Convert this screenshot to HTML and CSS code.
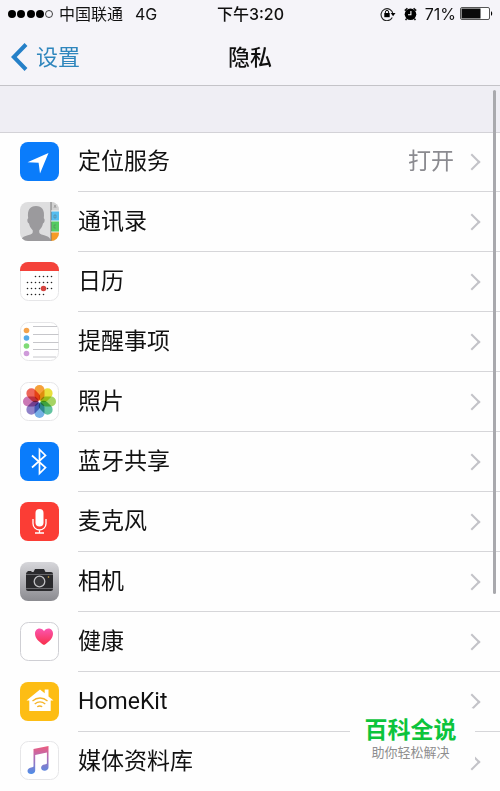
FILE: index.html
```
<!DOCTYPE html>
<html lang="zh-CN">
<head>
	<meta charset="utf-8">
	<meta name="viewport" content="width=device-width, initial-scale=1">
	<title>隐私</title>
	<link rel="stylesheet" href="styles.css">
</head>
<body>
	<header class="header">
		<div class="status">
			<div class="status-left">
				<svg class="signal" viewBox="0 0 46 10" width="46" height="10">
					<circle cx="4" cy="5" r="4"/>
					<circle cx="13" cy="5" r="4"/>
					<circle cx="23" cy="5" r="4"/>
					<circle cx="32" cy="5" r="4"/>
					<circle cx="41" cy="5" r="3.5" fill="none" stroke="#111" stroke-width="0.8"/>
				</svg>
				<span class="carrier">中国联通</span>
				<span>4G</span>
			</div>
			<div class="time">下午3:20</div>
			<div class="status-right">
				<svg class="lock" viewBox="0 0 16 14" width="16" height="14">
					<path d="M12.3 10.6A6 6 0 1 1 13 7" fill="none" stroke="#222" stroke-width="1.1"/>
					<path d="M10.7 6h4.8l-2.4 3.2z"/>
					<rect x="4.3" y="6" width="5.4" height="4.2"/>
					<path d="M5.4 6.2V5a1.6 1.6 0 0 1 3.2 0v1.2" fill="none" stroke="#111"/>
				</svg>
				<svg class="alarm" viewBox="0 0 13 14" width="13" height="14">
					<circle cx="6.500" cy="7.300" r="5.800"/>
					<path d="M.8 3.6 3.4 1.200M12.200 3.6 9.600 1.200M2.600 11.600 1.600 13.200M10.400 11.600l1 1.600" stroke="#111" stroke-width="1.500"/>
					<path d="M6.900 4v3.800H4" fill="none" stroke="#fff" stroke-width="1.100"/>
				</svg>
				<span class="percent">71%</span>
				<svg viewBox="0 0 33 14" width="33" height="14">
					<rect x=".5" y=".5" width="29" height="12" rx="1.5" fill="#fff" stroke="#555"/>
					<rect x="1.5" y="1.5" width="19" height="10" fill="#0a0a0a"/>
					<path d="M31 4.2c1.6.6 1.6 4 0 4.6z"/>
				</svg>
			</div>
		</div>
		<nav class="nav">
			<a class="back" href="#">
				<svg viewBox="0 0 17 28" width="17" height="28"><path d="M15 1.5 2.8 14 15 26.5" fill="none" stroke="#2580c8" stroke-width="4"/></svg>
				<span>设置</span>
			</a>
			<h1>隐私</h1>
		</nav>
	</header>

	<main>
		<ul class="list">
			<li><a class="row" href="#">
				<svg class="icon" viewBox="0 0 39 39">
					<rect width="39" height="39" rx="8" fill="#0a7cfb"/>
					<path d="M28.5 11 20 31.5 18.6 20.8 7.5 20.3z" fill="#fff"/>
				</svg>
				<span class="label"><span>定位服务</span><span class="value">打开</span><i class="chevron"></i></span>
			</a></li>
			<li><a class="row" href="#">
				<svg class="icon" viewBox="0 0 39 39">
					<clipPath id="tile"><rect width="39" height="39" rx="8"/></clipPath>
					<g clip-path="url(#tile)">
						<rect width="39" height="39" fill="#dededf"/>
						<path d="M1 39c.5-4 4-5 8.500-6.200 3-.8 3.500-1.800 3.200-4.500C10.500 26 9.500 24 9 21.500c-1.800-1-2.200-4.500-.8-5.300C7 8 10 4 16 4s9 4 7.800 12.200c1.400.8 1 4.300-.8 5.300-.5 2.500-1.500 4.500-3.700 6.800-.3 2.700.2 3.700 3.200 4.500C27 34 30 35 31 39z" fill="#9b9a9d"/>
						<path d="M31 0h8v9h-8z" fill="#d2d2d2"/>
						<path d="M31 9h8v10h-8z" fill="#55bdf0"/>
						<path d="M31 19h8v11h-8z" fill="#55cb62"/>
						<path d="M31 30h8v9h-8z" fill="#f69b26"/>
						<path d="M31 0v39" stroke="#777"/>
						<path d="M31 9h8M31 19h8M31 30h8" stroke="#eee"/>
						<path d="M34 6l1-3 1 3M34 13h2v3h-2zM36 23h-2v3h2" fill="none" stroke="#555" stroke-opacity=".5" stroke-width=".7"/>
					</g>
				</svg>
				<span class="label"><span>通讯录</span><i class="chevron"></i></span>
			</a></li>
			<li><a class="row" href="#">
				<svg class="icon" viewBox="0 0 39 39">
					<rect x=".5" y=".5" width="38" height="38" rx="8" fill="#fff" stroke="#e6e6e8"/>
					<path d="M0 9V8a8 8 0 0 1 8-8h23a8 8 0 0 1 8 8v1z" fill="#f4423a"/>
					<path d="M15.500 14.500H33M7.500 20.500H33M7.500 26.500H33M7.500 32.500H25" fill="none" stroke="#222" stroke-width="1.600" stroke-linecap="round" stroke-dasharray="0 4"/>
					<circle cx="23.500" cy="26.500" r="2.800" fill="#d5443f"/>
				</svg>
				<span class="label"><span>日历</span><i class="chevron"></i></span>
			</a></li>
			<li><a class="row" href="#">
				<svg class="icon" viewBox="0 0 39 39">
					<rect x=".5" y=".5" width="38" height="38" rx="8" fill="#fff" stroke="#e6e6e8"/>
					<path d="M13 4.500h24M13 12.500h25.500M13 20.500h25.500M13 27.500h25.500M13 35h23" stroke="#bfbfc4" stroke-width=".9"/>
					<circle cx="6.500" cy="8.500" r="2.800" fill="#f5a34b"/>
					<circle cx="6.500" cy="16" r="2.800" fill="#55aae8"/>
					<circle cx="6.500" cy="24" r="2.800" fill="#7fdb76"/>
					<circle cx="6.500" cy="31.500" r="2.800" fill="#cf9bda"/>
				</svg>
				<span class="label"><span>提醒事项</span><i class="chevron"></i></span>
			</a></li>
			<li><a class="row" href="#">
				<svg class="icon" viewBox="0 0 39 39">
					<rect x=".5" y=".5" width="38" height="38" rx="8" fill="#fff" stroke="#e6e6e8"/>
					<g class="petals">
						<rect x="14.500" y="3" width="10" height="15.500" rx="5" fill="#f6a13a"/>
						<rect x="14.500" y="3" width="10" height="15.500" rx="5" fill="#e9e03c" transform="rotate(45 19.500 19.500)"/>
						<rect x="14.500" y="3" width="10" height="15.500" rx="5" fill="#a6d464" transform="rotate(90 19.500 19.500)"/>
						<rect x="14.500" y="3" width="10" height="15.500" rx="5" fill="#62c3a0" transform="rotate(135 19.500 19.500)"/>
						<rect x="14.500" y="3" width="10" height="15.500" rx="5" fill="#76b0e6" transform="rotate(180 19.500 19.500)"/>
						<rect x="14.500" y="3" width="10" height="15.500" rx="5" fill="#8f82c8" transform="rotate(225 19.500 19.500)"/>
						<rect x="14.500" y="3" width="10" height="15.500" rx="5" fill="#cb79b5" transform="rotate(270 19.500 19.500)"/>
						<rect x="14.500" y="3" width="10" height="15.500" rx="5" fill="#ee6659" transform="rotate(315 19.500 19.500)"/>
					</g>
				</svg>
				<span class="label"><span>照片</span><i class="chevron"></i></span>
			</a></li>
			<li><a class="row" href="#">
				<svg class="icon" viewBox="0 0 39 39">
					<rect width="39" height="39" rx="8" fill="#0a7cfb"/>
					<path d="M12 13.500 25.500 25.500 19.500 31.500V7.500L25.500 13.500 12 25.500" fill="none" stroke="#fff" stroke-width="1.700"/>
				</svg>
				<span class="label"><span>蓝牙共享</span><i class="chevron"></i></span>
			</a></li>
			<li><a class="row" href="#">
				<svg class="icon" viewBox="0 0 39 39">
					<rect width="39" height="39" rx="8" fill="#fb3d35"/>
					<rect x="15.500" y="7" width="8" height="17.500" rx="4" fill="#fff"/>
					<path d="M13 17v4.500a6.500 6.500 0 0 0 13 0V17M19.500 28v3M15 31h9" fill="none" stroke="#fff" stroke-width="1.300"/>
				</svg>
				<span class="label"><span>麦克风</span><i class="chevron"></i></span>
			</a></li>
			<li><a class="row" href="#">
				<svg class="icon" viewBox="0 0 39 39">
					<linearGradient id="steel" x2="0" y2="1"><stop stop-color="#d6d6da"/><stop offset="1" stop-color="#8b8b90"/></linearGradient>
					<rect width="39" height="39" rx="8" fill="url(#steel)"/>
					<path d="M7.500 10V9h4v1h2l1.500-3h9l1.500 3H31a2 2 0 0 1 2 2v15a2 2 0 0 1-2 2H8a2 2 0 0 1-2-2V12q0-2 1.500-2z" fill="#29292c"/>
					<path d="M6 12.500h27M6 26.500h27" stroke="#77777b" stroke-width=".8"/>
					<circle cx="19.500" cy="19.500" r="6.800" fill="#29292c"/>
					<circle cx="19.500" cy="19.500" r="5.300" fill="#37373a" stroke="#c0c0c3" stroke-width="1.300"/>
					<circle cx="28.500" cy="15" r=".8" fill="#e0b54b"/>
				</svg>
				<span class="label"><span>相机</span><i class="chevron"></i></span>
			</a></li>
			<li><a class="row" href="#">
				<svg class="icon" viewBox="0 0 39 39">
					<linearGradient id="pink" x2="0" y2="1"><stop stop-color="#fb55b0"/><stop offset="1" stop-color="#f8304a"/></linearGradient>
					<rect x=".5" y=".5" width="38" height="38" rx="8" fill="#fff" stroke="#cfcfd4"/>
					<path d="M24 23c-5-3-9-7-9-11.300C15 8.600 17 6.500 19.500 6.500c2 0 3.500 1 4.500 2.700 1-1.700 2.500-2.700 4.500-2.700 2.500 0 4.500 2.100 4.500 5.200C33 16 29 20 24 23z" fill="url(#pink)"/>
				</svg>
				<span class="label"><span>健康</span><i class="chevron"></i></span>
			</a></li>
			<li><a class="row" href="#">
				<svg class="icon" viewBox="0 0 39 39">
					<rect width="39" height="39" rx="8" fill="#fdbd14"/>
					<path d="M20 7.500 6.500 18.500h2.800V29h21.400V18.500h2.800L28.500 14.400V7.500h-3.800v3.800z" fill="#fff"/>
					<path d="M12.500 19c4.500-4 10.500-4 15 0M14.700 22c3.200-2.600 7.400-2.600 10.600 0M17.200 24.800c1.800-1.200 3.200-1.200 5 0" fill="none" stroke="#f5b52a" stroke-width="1.300"/>
				</svg>
				<span class="label"><span>HomeKit</span><i class="chevron"></i></span>
			</a></li>
			<li><a class="row" href="#">
				<svg class="icon" viewBox="0 0 39 39">
					<linearGradient id="note" x1="0" y1="0" x2="0" y2="1"><stop stop-color="#ee5b7c"/><stop offset=".35" stop-color="#bb6bb0"/><stop offset="1" stop-color="#4d8ee8"/></linearGradient>
					<rect x=".5" y=".5" width="38" height="38" rx="8" fill="#fff" stroke="#e6e6e8"/>
					<path d="M13.500 8 28.500 5v21.500c0 2-1.800 3.200-3.900 3.200-2 0-3.500-1.200-3.500-3s1.500-3 3.500-3.200c1.600-.2 2.300-.5 2.300-1.500V11.500L15.200 14v15.500c0 2.100-1.800 3.500-4 3.500-2.100 0-3.700-1.200-3.700-3s1.500-3.100 3.600-3.400c1.700-.3 2.400-.6 2.400-1.600z" fill="url(#note)"/>
				</svg>
				<span class="label"><span>媒体资料库</span><i class="chevron"></i></span>
			</a></li>
		</ul>
	</main>

	<div class="scrollbar"></div>
	<div class="watermark">
		<strong>百科全说</strong>
		<span>助你轻松解决</span>
	</div>
</body>
</html>
```
FILE: styles.css
```
* {
	box-sizing: border-box;
}

body {
	margin: 0;
	position: relative;
	background: #fefefe;
	color: #111;
	font-family: Inter, "Noto Sans CJK SC", sans-serif;
}

a {
	color: inherit;
	text-decoration: none;
}

svg {
	display: block;
	flex: none;
}

/* status bar + title */
.header {
	background: #f5f4f9;
	border-bottom: 1px solid #c4c3c8;
}

.status {
	display: grid;
	grid-template-columns: 1fr auto 1fr;
	align-items: center;
	height: 28px;
	padding: 0 7px 0 8px;
	font-size: 16px;
	line-height: 28px;
}

.status-left, .status-right {
	display: flex;
	align-items: center;
}

.status-right {
	justify-content: flex-end;
}

.carrier {
	margin: 0 12px 0 5px;
}

.time {
	font-weight: 500;
}

.lock {
	margin-right: 8px;
}

.alarm {
	margin-right: 8px;
}

.percent {
	margin-right: 4px;
}

.nav {
	display: grid;
	grid-template-columns: 1fr auto 1fr;
	align-items: center;
	height: 57px;
	padding: 0 11px;
}

.back {
	display: flex;
	align-items: center;
	gap: 8px;
	color: #2f86bd;
	font-size: 22px;
	line-height: 32px;
}

h1 {
	margin: 0;
	font-size: 22px;
	line-height: 32px;
	font-weight: 500;
}

/* settings rows */
.list {
	margin: 0;
	padding: 46px 0 0;
	list-style: none;
	background: linear-gradient(#efeef4, #efeef4) top / 100% 46px no-repeat;
}

.row {
	display: flex;
	align-items: center;
	gap: 19px;
	padding-left: 20px;
}

.icon {
	width: 39px;
	height: 39px;
	margin-bottom: 2px;
}

.label {
	flex: 1;
	display: flex;
	align-items: center;
	height: 60px;
	padding-right: 22px;
	border-bottom: 1px solid #d6d6d9;
	font-family: Roboto, "Noto Sans CJK SC", sans-serif;
	font-size: 23px;
	line-height: 32px;
}

.list li:first-child {
	border-top: 1px solid #d3d2d7;
}

.list li:first-child .label {
	height: 59px;
}

.list li:last-child .label {
	height: 59px;
	border-bottom: 0;
}

.value {
	margin-left: auto;
	color: #8b8b90;
}

.chevron {
	width: 12px;
	height: 12px;
	margin-left: auto;
	border: solid #c3c3c8;
	border-width: 2px 2px 0 0;
	transform: rotate(45deg);
}

.value + .chevron {
	margin-left: 12px;
}

.petals rect {
	mix-blend-mode: multiply;
}

.scrollbar {
	position: absolute;
	top: 90px;
	right: 4px;
	width: 3px;
	height: 504px;
	border-radius: 2px;
	background: #a9a9ad;
}

.watermark {
	position: absolute;
	right: 25px;
	bottom: 26px;
	display: flex;
	flex-direction: column;
	align-items: center;
	width: 125px;
	padding: 8px 4px 4px 0;
	background: #fefefe;
	border-radius: 4px;
}

.watermark strong {
	color: #0cc43c;
	font-size: 23px;
	line-height: 28px;
	font-weight: 700;
}

.watermark span {
	color: #8e8e8e;
	font-size: 13px;
	line-height: 17px;
}
```
